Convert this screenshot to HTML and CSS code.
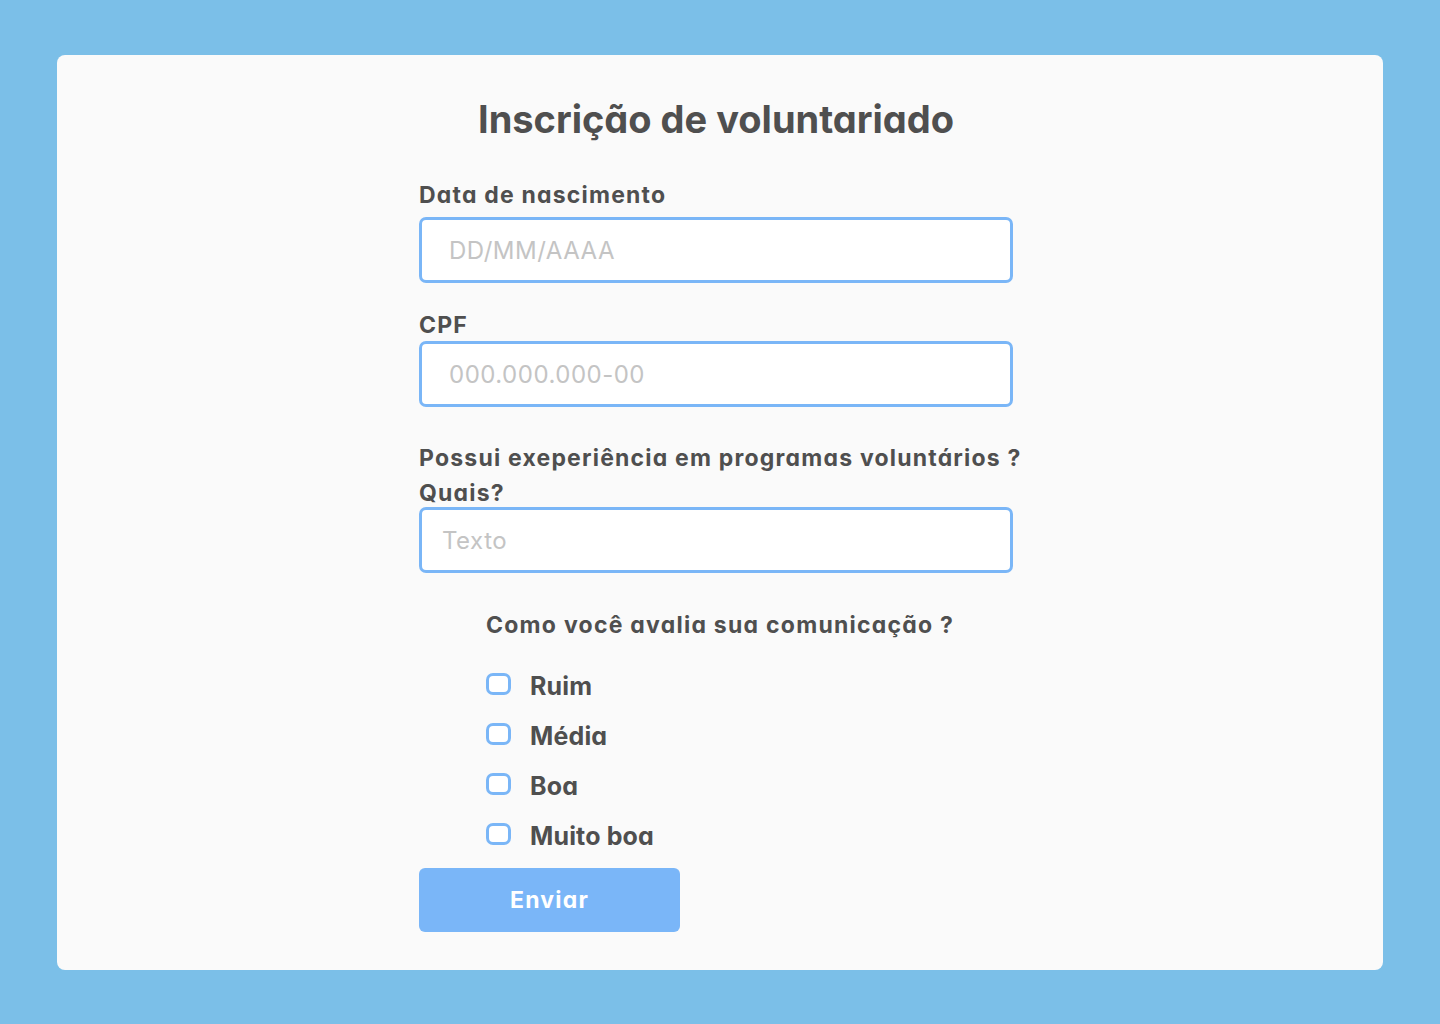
FILE: index.html
```html
<!DOCTYPE html>
<html lang="pt-BR">
<head>
<meta charset="utf-8">
<title>Inscrição de voluntariado</title>
<link rel="stylesheet" href="styles.css">
</head>
<body>
<main class="card">
  <form class="form">
    <h1 class="title">Inscrição de voluntariado</h1>
    <label class="label label-first" for="nasc">Data de nascimento</label>
    <input class="field" id="nasc" type="text" placeholder="DD/MM/AAAA">
    <label class="label label-cpf" for="cpf">CPF</label>
    <input class="field" id="cpf" type="text" placeholder="000.000.000-00">
    <label class="label label-exp" for="exp">Possui exeperiência em programas voluntários ?<br>Quais?</label>
    <input class="field field-text" id="exp" type="text" placeholder="Texto">
    <div class="rating" role="group" aria-labelledby="rating-title">
      <p class="rating-title" id="rating-title">Como você avalia sua comunicação ?</p>
      <label class="option"><span class="box"></span><span class="option-text">Ruim</span></label>
      <label class="option"><span class="box"></span><span class="option-text">Média</span></label>
      <label class="option"><span class="box"></span><span class="option-text">Boa</span></label>
      <label class="option"><span class="box"></span><span class="option-text">Muito boa</span></label>
    </div>
    <button class="submit" type="button">Enviar</button>
  </form>
</main>
</body>
</html>
```
FILE: styles.css
```css
* { box-sizing: border-box; }
html, body { margin: 0; }
body {
  background: #7bbfe8;
  padding: 55px 57px 54px;
  font-family: "Inter", "Open Sans", sans-serif;
  font-feature-settings: "cv11" 1;
  color: #4f4f4f;
}
.card {
  background: #fafafa;
  border-radius: 8px;
  height: 915px;
  padding: 0 0 0 362px;
}
.form {
  width: 594px;
  display: flex;
  flex-direction: column;
}
.title {
  margin: 0;
  padding-top: 40px;
  text-align: center;
  font-size: 38px;
  line-height: 48px;
  font-weight: 700;
  letter-spacing: 0;
}
.label {
  font-size: 23px;
  line-height: 28px;
  font-weight: 700;
  letter-spacing: 1.2px;
}
.label-first { margin-top: 38px; margin-bottom: 8px; }
.label-cpf { margin-top: 28px; margin-bottom: 2px; }
.label-exp {
  margin-top: 34px;
  margin-bottom: -4px;
  line-height: 35px;
  white-space: nowrap;
}
.field {
  height: 66px;
  border: 3px solid #7ab6f7;
  border-radius: 7px;
  background: #fff;
  padding: 0 27px;
  font-family: inherit;
  font-feature-settings: "cv11" 1;
  font-size: 24px;
  letter-spacing: 0.5px;
  color: #4f4f4f;
  outline: none;
}
.field::placeholder { color: #c4c4c4; }
.field-text { padding-left: 20px; }
.rating {
  margin: 38px 0 0 67px;
}
.rating-title {
  margin: 0 0 22px;
  font-size: 23px;
  line-height: 28px;
  font-weight: 700;
  letter-spacing: 1.25px;
}
.option {
  display: flex;
  align-items: center;
  height: 50px;
  gap: 19px;
}
.box {
  width: 25px;
  height: 22px;
  border: 3px solid #7ab6f7;
  border-radius: 7px;
  background: #fff;
  margin-top: -4px;
}
.option-text {
  font-size: 25px;
  line-height: 50px;
  font-weight: 700;
  letter-spacing: 0.15px;
}
.submit {
  margin-top: 7px;
  width: 261px;
  height: 64px;
  border: 0;
  border-radius: 6px;
  background: #7ab6f8;
  color: #fff;
  font-family: inherit;
  font-feature-settings: "cv11" 1;
  font-size: 23px;
  font-weight: 700;
  letter-spacing: 1.2px;
}
```
